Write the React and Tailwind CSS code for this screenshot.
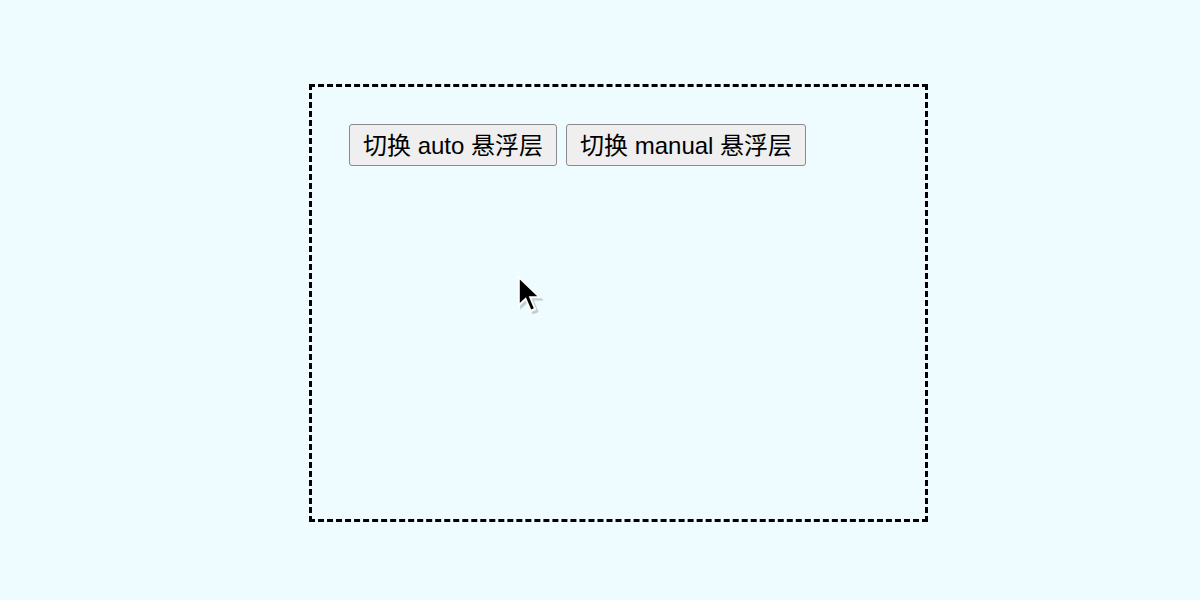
import React from 'react';

const btn =
  "pl-[13px] pr-[13px] pt-[7px] pb-[5px] bg-[#efefef] border border-[#8a8a8a] rounded-[3px] text-[24px] leading-[28px] text-black [font-family:'Liberation_Sans','Noto_Sans_CJK_SC',sans-serif]";

const App = () => {
  return (
    <div className="relative w-[1200px] h-[600px] bg-[#effcff] pt-[84px] pl-[309px] overflow-hidden">
      {/* Dashed container */}
      <div className="w-[619px] h-[438px] border-[3px] border-dashed border-black pt-[37px] pl-[37px]">
        <div className="flex gap-[9px] items-start">
          <button className={btn}>切换 auto 悬浮层</button>
          <button className={btn}>切换 manual 悬浮层</button>
        </div>
      </div>

      {/* Mouse cursor */}
      <svg
        className="absolute left-[517px] top-[274px]"
        width="28"
        height="40"
        viewBox="0 0 16 22.5"
      >
        <path
          d="M1 1 V19.5 L5.3 15.4 L8.2 22.2 L11.6 20.8 L8.8 14.2 H14.5 Z"
          fill="rgba(0,0,0,0.18)"
          transform="translate(0.8 0.8)"
        />
        <path
          d="M0.5 0.5 V19 L4.8 14.9 L7.7 21.7 L11.1 20.3 L8.3 13.7 H14 Z"
          fill="#fff"
        />
        <path
          d="M1.6 2.9 V16.4 L5.1 13.1 L8.1 20.1 L9.6 19.4 L6.7 12.5 H11.6 Z"
          fill="#000"
        />
      </svg>
    </div>
  );
};

export default App;
